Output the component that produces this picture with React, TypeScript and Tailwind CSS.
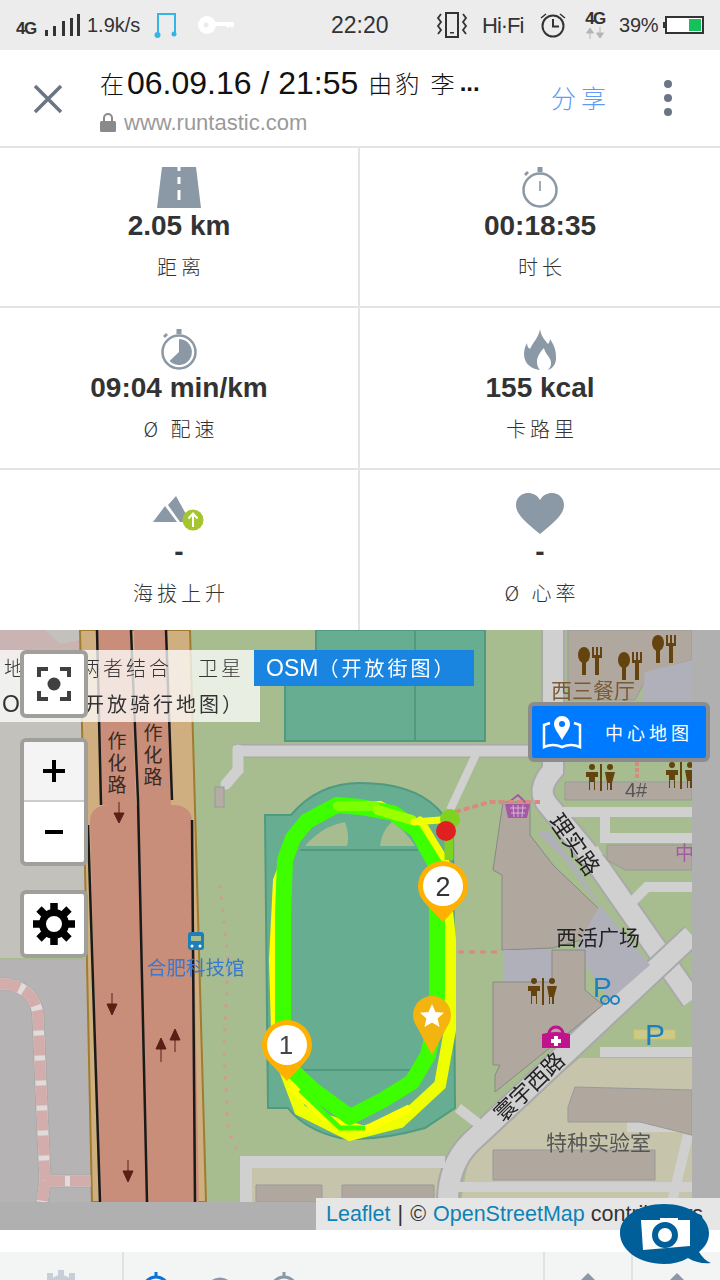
import React from "react";

const cjk = "font-['Noto_Sans_CJK_SC',sans-serif]";

const RoadIcon = () => (
  <svg width="44" height="41" viewBox="0 0 44 41">
    <path d="M5 0h34l5 41H0z" fill="#8b98a6" />
    <rect x="20.500" y="0" width="3" height="4" fill="#fff" />
    <rect x="20.500" y="10" width="3" height="7" fill="#fff" />
    <rect x="20.500" y="23" width="3" height="10" fill="#fff" />
  </svg>
);

const WatchIcon = () => (
  <svg width="40" height="41" viewBox="0 0 40 41">
    <rect x="17.500" y="0" width="5" height="5" fill="#8b98a6" />
    <path d="M4 7l3-3 2 2-3 3z" fill="#8b98a6" />
    <circle cx="20" cy="23" r="16.500" fill="none" stroke="#8b98a6" strokeWidth="2.500" />
    <rect x="19.200" y="14" width="1.600" height="10" fill="#8b98a6" />
  </svg>
);

const PaceIcon = () => (
  <svg width="40" height="41" viewBox="0 0 40 41">
    <rect x="17.500" y="0" width="5" height="5" fill="#8b98a6" />
    <path d="M4 7l3-3 2 2-3 3z" fill="#8b98a6" />
    <circle cx="20" cy="23" r="16.500" fill="none" stroke="#8b98a6" strokeWidth="2.500" />
    <path d="M20 10a13 13 0 1 1-9.500 22L20 23z" fill="#8b98a6" />
  </svg>
);

const FlameIcon = () => (
  <svg width="32" height="41" viewBox="0 0 32 41">
    <path
      d="M16 0c1 7 4 10 8 15 1-1 2-3 2-5 4 6 6 11 6 19 0 6-3 10-8 12 3-3 4-7 2-11-2-4-5-6-6-11-3 3-7 8-7 14 0 3 1 6 3 8-7-1-16-5-16-16 0-3 1-8 3-11 0 3 1 5 3 6C9 13 15 8 16 0z"
      fill="#8b98a6"
    />
  </svg>
);

const ClimbIcon = () => (
  <svg width="52" height="36" viewBox="0 0 52 36">
    <path d="M0 26L12 10l12 16z" fill="#8b98a6" />
    <path d="M15 9L23 0l11 20-4 6-3 0z" fill="#8b98a6" />
    <circle cx="40" cy="24" r="10.500" fill="#a4c52e" />
    <path d="M40 31V18M35.500 22.500L40 17.500l4.500 5" fill="none" stroke="#fff" strokeWidth="2" />
  </svg>
);

const HeartIcon = () => (
  <svg width="50" height="41" viewBox="0 0 50 41">
    <path d="M25 41C12 30 1 22 1 12 1 5 6 0 13 0c5 0 9 2 12 7 3-5 7-7 12-7 7 0 12 5 12 12 0 10-11 18-24 29z" fill="#8b98a6" />
  </svg>
);

const stats = [
  { value: "2.05 km", label: "距离", icon: <RoadIcon />, pad: "pt-[19px] h-[158px] border-r-2" },
  { value: "00:18:35", label: "时长", icon: <WatchIcon />, pad: "pt-[19px] h-[158px]" },
  { value: "09:04 min/km", label: "Ø 配速", icon: <PaceIcon />, pad: "pt-[21px] h-[160px] border-r-2" },
  { value: "155 kcal", label: "卡路里", icon: <FlameIcon />, pad: "pt-[21px] h-[160px]" },
  { value: "-", label: "海拔上升", icon: <ClimbIcon />, pad: "pt-[23px] h-[160px] border-r-2" },
  { value: "-", label: "Ø 心率", icon: <HeartIcon />, pad: "pt-[23px] h-[160px]" },
];

const StatCell = ({ value, label, icon, pad }: { value: string; label: string; icon: React.ReactNode; pad: string }) => (
  <div className={`flex flex-col items-center border-[#e4e4e4] ${pad}`}>
    <div className="h-[41px] flex items-center justify-center">{icon}</div>
    <div className="h-[36px] leading-[36px] text-[28px] font-bold text-[#333]">{value}</div>
    <div className={`mt-[9px] h-[28px] leading-[28px] pl-[4px] text-[20px] tracking-[4px] text-[#333] font-light ${cjk}`}>{label}</div>
  </div>
);

const StatusBar = () => (
  <div className="h-[50px] bg-[#ececec] flex items-center text-[#333] shrink-0">
    <span className="ml-[16px] w-[22px] mt-[8px] text-[17px] font-bold tracking-[-1.500px]">4G</span>
    <svg className="ml-[6px]" width="36" height="24" viewBox="0 0 36 24">
      <rect x="1" y="17" width="3" height="6" fill="#333" />
      <rect x="9" y="13" width="3" height="10" fill="#333" />
      <rect x="18" y="8" width="3" height="15" fill="#333" />
      <rect x="26" y="5" width="3" height="18" fill="#333" />
      <rect x="33" y="1" width="3" height="22" fill="#333" />
    </svg>
    <span className="ml-[7px] w-[60px] text-[20px]">1.9k/s</span>
    <svg className="ml-[7px]" width="24" height="28" viewBox="0 0 24 28">
      <path d="M4 24V3h17v20" fill="none" stroke="#35b5e5" strokeWidth="2" />
      <circle cx="3.500" cy="24" r="3" fill="#35b5e5" />
      <circle cx="20" cy="23" r="2.500" fill="#35b5e5" />
    </svg>
    <svg className="ml-[20px]" width="36" height="18" viewBox="0 0 36 18">
      <circle cx="9" cy="9" r="9" fill="#fff" />
      <circle cx="8" cy="9" r="2.500" fill="#ececec" />
      <path d="M16 6h20v4l-2 2-2-2-2 2-2-2h-12z" fill="#fff" />
    </svg>
    <span className="ml-[97px] w-[60px] text-[23px]">22:20</span>
    <svg className="ml-[45px]" width="32" height="28" viewBox="0 0 32 28">
      <rect x="10" y="2" width="12" height="24" fill="none" stroke="#333" strokeWidth="2" />
      <rect x="14" y="21" width="4" height="1.500" fill="#333" />
      <path d="M5 3l-3 4 3 4-3 4 3 4-3 4M27 3l3 4-3 4 3 4-3 4 3 4" fill="none" stroke="#333" strokeWidth="1.800" />
    </svg>
    <span className="ml-[14px] w-[44px] text-[22px] tracking-[-1px]">Hi·Fi</span>
    <svg className="ml-[13px]" width="28" height="28" viewBox="0 0 28 28">
      <circle cx="14" cy="15" r="10.500" fill="none" stroke="#333" strokeWidth="2" />
      <path d="M14 8v7.500h6" fill="none" stroke="#333" strokeWidth="2" />
      <path d="M2 7l5-4M26 7l-5-4" fill="none" stroke="#333" strokeWidth="1.500" />
    </svg>
    <div className="ml-[17px] w-[22px] flex flex-col items-center">
      <span className="text-[17px] leading-[16px] font-bold tracking-[-1.500px]">4G</span>
      <svg width="20" height="12" viewBox="0 0 20 12">
        <path d="M5 12V5M1.500 6L5 1l3.500 5z" stroke="#b5b5b5" fill="#b5b5b5" />
        <path d="M15 0v7M11.500 6L15 11l3.500-5z" stroke="#b5b5b5" fill="#b5b5b5" />
      </svg>
    </div>
    <span className="ml-[13px] w-[44px] text-[20px] tracking-[-0.200px]">39%</span>
    <svg width="41" height="18" viewBox="0 0 41 18">
      <rect x="0" y="6" width="2" height="6" fill="#333" />
      <rect x="3" y="1" width="37" height="16" fill="#fff" stroke="#333" strokeWidth="2" />
      <rect x="26" y="3" width="12" height="12" fill="#16c05a" />
    </svg>
  </div>
);

const Header = () => (
  <div className="h-[98px] bg-white border-b-2 border-[#e4e4e4] flex items-center shrink-0">
    <svg className="ml-[33px] mt-[1px]" width="30" height="30" viewBox="0 0 30 30">
      <path d="M2 2l26 26M28 2L2 28" stroke="#6c7585" strokeWidth="3.500" fill="none" />
    </svg>
    <div className="ml-[37px] w-[420px] mt-[2px]">
      <div className="text-[32px] leading-[38px] text-[#111] whitespace-nowrap flex items-center">
        <span className={`text-[24px] mr-[3px] font-light ${cjk}`}>在</span>
        06.09.16 / 21:55
        <span className={`text-[24px] ml-[10px] tracking-[3px] font-light whitespace-pre ${cjk}`}>由豹 李</span>
        <span className="ml-[2px] text-[24px] font-bold">...</span>
      </div>
      <div className="flex items-center h-[24px] mt-[8px]">
        <svg width="16" height="19" viewBox="0 0 16 19">
          <path d="M4 8V5a4 4 0 0 1 8 0v3" fill="none" stroke="#8a8a8a" strokeWidth="2" />
          <rect x="0" y="8" width="16" height="11" rx="1.500" fill="#8a8a8a" />
        </svg>
        <span className="ml-[8px] text-[22px] text-[#9a9a9a]">www.runtastic.com</span>
      </div>
    </div>
    <span className={`ml-[31px] w-[80px] text-[25px] tracking-[5px] text-[#5f9bf5] font-light ${cjk}`}>分享</span>
    <div className="ml-[33px] flex flex-col gap-[6px]">
      <span className="size-[8px] rounded-full bg-[#6c7585]" />
      <span className="size-[8px] rounded-full bg-[#6c7585]" />
      <span className="size-[8px] rounded-full bg-[#6c7585]" />
    </div>
  </div>
);

// 刀叉 / 厕所之类的地图小图标
const Fork = ({ x, y }: { x: number; y: number }) => (
  <g transform={`translate(${x} ${y})`} fill="#65430e">
    <ellipse cx="6" cy="8" rx="6" ry="8" />
    <rect x="4" y="14" width="4" height="14" />
    <path d="M14 0h2v8h2V0h2v8h2V0h2v11h-3v17h-4V11h-3z" />
  </g>
);

const Toilet = ({ x, y }: { x: number; y: number }) => (
  <g transform={`translate(${x} ${y})`} fill="#65430e">
    <circle cx="6" cy="3" r="3" />
    <path d="M0 8h12v5H9v13H8v-8H4v8H3V13H0z" />
    <rect x="14" y="0" width="2" height="27" />
    <circle cx="24" cy="3" r="3" />
    <path d="M19 8h10l-3 11v7h-2v-7h-2v7h-1v-7z" />
  </g>
);

const MapDrawing = () => (
  <svg className="block" width="720" height="600" viewBox="0 630 720 600">
    <rect x="0" y="630" width="720" height="600" fill="#b0b0b0" />
    <svg x="0" y="630" width="692" height="572" viewBox="0 630 692 572">
      <g className="blur-[0.6px]">
        <rect x="0" y="630" width="692" height="572" fill="#a7bd8f" />
        <path d="M0 630H90V958H0z" fill="#c3c1bc" />
        <path d="M0 960H95V1202H0z" fill="#b5b3b3" />
        <path d="M0 630h45l15 14 20-4v22H0z" fill="#c9b3b3" />
        {/* 左下小路 */}
        <path d="M0 984h8q28 6 30 32l7 165M45 1181h50M45 1181l-3 21" fill="none" stroke="#a9a9a9" strokeWidth="13" />
        <path d="M0 984h8q28 6 30 32l7 165M45 1181h50M45 1181l-3 21" fill="none" stroke="#e0dcdc" strokeWidth="11" />
        <path d="M0 984h8q28 6 30 32l7 165M45 1181h50M45 1181l-3 21" fill="none" stroke="#d3adac" strokeWidth="11" strokeDasharray="20 5" />
        {/* 高架 */}
        <path d="M80 630H190L206 1202H92z" fill="#cfae80" stroke="#a07c30" strokeWidth="2" />
        <path d="M98 630H130L136 805H101z" fill="#c98e7a" />
        <path d="M134 630H166L171 805H138z" fill="#c98e7a" />
        <path d="M90 822q0-17 20-17h62q20 0 20 17l7 380H100z" fill="#c98e7a" />
        <path d="M97 630l4 175M131 630l7 170L147 1202M166 630l6 170M88 825L100 1202M192 820L195 1202" fill="none" stroke="#1a1a1a" strokeWidth="2.500" />
        <path d="M119 802v12M114 813l5 10 5-10z" fill="#5a1f15" stroke="#5a1f15" />
        <path d="M112 993v12M107 1004l5 11 5-11z" fill="#5a1f15" stroke="#5a1f15" />
        <path d="M128 1160v12M123 1171l5 11 5-11z" fill="#5a1f15" stroke="#5a1f15" />
        <path d="M161 1062v-14M156 1049l5-11 5 11z" fill="#5a1f15" stroke="#5a1f15" />
        <path d="M175 1052v-13M170 1040l5-11 5 11z" fill="#5a1f15" stroke="#5a1f15" />
        <text x="117" y="731" writingMode="vertical-rl" fontSize="19" letterSpacing="3" fill="#3a2a20" fontFamily="Noto Sans CJK SC, sans-serif">作化路</text>
        <text x="153" y="723" writingMode="vertical-rl" fontSize="19" letterSpacing="3" fill="#3a2a20" fontFamily="Noto Sans CJK SC, sans-serif">作化路</text>
        <path d="M220 885L228 960L224 1050L228 1130L241 1160" fill="none" stroke="#d39a90" strokeWidth="3" strokeDasharray="3 9" />

        {/* 球场 */}
        <path d="M316 630V660H285V741H485V630z" fill="#67ad92" stroke="#4f9a80" strokeWidth="2" />
        <path d="M415 630V741" stroke="#4f9a80" strokeWidth="2" />
        <path d="M265 815H291Q318 783 360 783Q412 783 437 808L453 826L455 1108L425 1128Q375 1142 340 1138Q305 1130 288 1108H268z" fill="#67ad92" stroke="#4f9a80" strokeWidth="2" />
        <path d="M300 850H418M292 1070H418" stroke="#4f9a80" strokeWidth="2" />
        <path d="M305 846Q322 826 345 822Q350 835 347 846z" fill="#a7bd8f" />
        <path d="M380 846Q382 830 392 822Q405 830 415 846z" fill="#a7bd8f" />

        {/* 地块 */}
        <path d="M470 1150L580 1058H692V1202H461z" fill="#c6c4ab" />
        <path d="M240 1165H445V1202H240z" fill="#c6c4ab" />

        {/* 道路 */}
        <path d="M233 751H552" stroke="#a9a9a9" strokeWidth="14" fill="none" />
        <path d="M233 751H552" stroke="#d0d0d0" strokeWidth="11" fill="none" />
        <path d="M238 750V770L226 784" stroke="#d0d0d0" strokeWidth="11" fill="none" strokeLinecap="round" />
        <rect x="215" y="787" width="9" height="20" fill="#b5ada5" stroke="#999" />
        <path d="M477 752L450 810" stroke="#d0d0d0" strokeWidth="8" fill="none" />
        <path d="M553 630V770Q535 790 548 805L600 868L692 1000" stroke="#a9a9a9" strokeWidth="24" fill="none" />
        <path d="M553 630V770Q535 790 548 805L600 868L692 1000" stroke="#d0d0d0" strokeWidth="20" fill="none" />
        <path d="M560 812H692M600 838H692M605 812V838M600 850L588 858M692 887H647L627 907" stroke="#d0d0d0" strokeWidth="10" fill="none" />
        <path d="M692 935L470 1143Q448 1165 448 1202" stroke="#a9a9a9" strokeWidth="24" fill="none" />
        <path d="M692 935L470 1143Q448 1165 448 1202" stroke="#d0d0d0" strokeWidth="20" fill="none" />
        <path d="M240 1162H445" stroke="#d0d0d0" strokeWidth="12" fill="none" />
        <path d="M246 1202V1162" stroke="#d0d0d0" strokeWidth="12" fill="none" />
        <path d="M450 1187H692" stroke="#d0d0d0" strokeWidth="10" fill="none" />
        <path d="M458 1108L480 1125" stroke="#d0d0d0" strokeWidth="10" fill="none" />
        <path d="M600 1052H692" stroke="#d0d0d0" strokeWidth="10" fill="none" />
        <path d="M627 1127H692M688 1135L672 1202" stroke="#d0d0d0" strokeWidth="10" fill="none" />

        {/* 建筑 */}
        <path d="M252 1172H436V1202H252z" fill="#c6c4ab" />
        <path d="M256 1185H322V1202H256zM342 1185H434V1202H342z" fill="#b0a89f" stroke="#999" />
        <path d="M568 630H692V660L650 672L635 700H568z" fill="#b0a89f" stroke="#999" />
        <path d="M645 672L692 660V700L640 722z" fill="#b0b0ba" />
        <path d="M565 782H692V800H565z" fill="#b0a89f" stroke="#999" />
        <path d="M607 845H692V870H625L607 860z" fill="#b0a89f" stroke="#999" />
        <path d="M503 802H530V835L553 865L600 910V935L552 948L502 950V875L493 870z" fill="#b0a89f" stroke="#888" />
        <path d="M537 832L550 832L575 865L600 905L590 895L565 860z" fill="#b0b0ba" />
        <path d="M600 905L650 965L610 1000L575 950z" fill="#b0b0ba" />
        <path d="M503 950H552V982H503z" fill="#b0b0ba" />
        <path d="M493 982H552V950H585V990L603 1005L495 1092V1075L500 1065H493z" fill="#b0a89f" stroke="#888" />
        <path d="M575 1087L692 1090V1135L640 1122H568V1107z" fill="#b0a89f" stroke="#999" />
        <path d="M493 1150H655V1180H493z" fill="#b0a89f" stroke="#999" />
        <rect x="634" y="1030" width="41" height="9" fill="#c8cb8e" stroke="#d8c060" />

        {/* 图标 */}
        <Fork x={578} y={647} />
        <Fork x={618} y={652} />
        <Fork x={652} y={635} />
        <Toilet x={586} y={764} />
        <Toilet x={666} y={762} />
        <Toilet x={528} y={978} />
        <path d="M505 804h25l-3 14h-19z" fill="#a35aa5" />
        <path d="M510 808h16M511 813h14M513 805l1 12M518 805v12M523 805l-1 12" stroke="#d7b3d8" strokeWidth="1" fill="none" />
        <path d="M508 803l10-8 8 8" fill="none" stroke="#a35aa5" strokeWidth="2" />
        <path d="M542 1034q14-4 28 0v14h-28z" fill="#c0148c" />
        <path d="M549 1034a7 7 0 0 1 14 0" fill="none" stroke="#c0148c" strokeWidth="3" />
        <path d="M554 1036h4v3h3v4h-3v3h-4v-3h-3v-4h3z" fill="#fff" />
        <rect x="188" y="932" width="16" height="18" rx="3" fill="#1c7fb8" />
        <rect x="191" y="936" width="10" height="5" fill="#a7bd8f" />
        <circle cx="192" cy="946" r="1.500" fill="#fff" />
        <circle cx="200" cy="946" r="1.500" fill="#fff" />
        <text x="593" y="997" fontSize="28" fill="#1c80c0" fontFamily="Liberation Sans, sans-serif">P</text>
        <text x="645" y="1045" fontSize="30" fill="#1c80c0" fontFamily="Liberation Sans, sans-serif">P</text>
        <circle cx="605" cy="1000" r="4" fill="none" stroke="#1c80c0" strokeWidth="2" />
        <circle cx="615" cy="1000" r="4" fill="none" stroke="#1c80c0" strokeWidth="2" />

        {/* 虚线 */}
        <path d="M455 812L490 802H540" fill="none" stroke="#d98a80" strokeWidth="4" strokeDasharray="6 3" />
        <path d="M637 762V778" stroke="#d98a80" strokeWidth="4" strokeDasharray="4 2" />
        <path d="M458 952H502" stroke="#d98a80" strokeWidth="3" strokeDasharray="6 5" />

        {/* 地名 */}
        <text x="551" y="698" fontSize="21" fill="#7a5a36" fontFamily="Noto Sans CJK SC, sans-serif">西三餐厅</text>
        <text x="625" y="797" fontSize="20" fill="#555" fontFamily="Liberation Sans, sans-serif">4#</text>
        <text x="556" y="945" fontSize="21" fill="#222" fontFamily="Noto Sans CJK SC, sans-serif">西活广场</text>
        <text x="147" y="975" fontSize="19.500" fill="#3a78d0" fontFamily="Noto Sans CJK SC, sans-serif">合肥科技馆</text>
        <text x="546" y="1150" fontSize="21" fill="#555" fontFamily="Noto Sans CJK SC, sans-serif">特种实验室</text>
        <text x="675" y="860" fontSize="19" fill="#a35aa5" fontFamily="Noto Sans CJK SC, sans-serif">中</text>
        <text transform="translate(548 821) rotate(55)" fontSize="23" fill="#222" fontFamily="Noto Sans CJK SC, sans-serif">理实路</text>
        <text transform="translate(503 1123) rotate(-44)" fontSize="22" fill="#222" fontFamily="Noto Sans CJK SC, sans-serif">寰宇西路</text>
      </g>

      {/* 轨迹 */}
      <path d="M274 1030L272 960L276 880L295 830L340 804" fill="none" stroke="#ffff00" strokeWidth="6" />
      <path d="M285 1070L300 1110L350 1135L400 1122L440 1085L450 1030V940L444 880" fill="none" stroke="#eeff00" strokeWidth="12" />
      <path d="M290 1085L325 1118L365 1130L410 1108" fill="none" stroke="#ffff00" strokeWidth="8" />
      <path d="M338 805H380L425 828L447 865" fill="none" stroke="#ffff00" strokeWidth="8" />
      <path d="M417 830L393 813L360 807L337 805L307 821L293 838L285 860L283 913L283 1023L292 1070L313 1090L350 1117L383 1100L412 1082L428 1055L436 1020L437 993L437 913L435 863z" fill="none" stroke="#3dff00" strokeWidth="16" strokeLinejoin="round" />
      <path d="M300 1090L340 1128L365 1128" fill="none" stroke="#3dff00" strokeWidth="5" />
      <path d="M338 806H375" fill="none" stroke="#7cff00" strokeLinecap="round" strokeWidth="10" />
      <path d="M378 810L412 820" fill="none" stroke="#9cff00" strokeLinecap="round" strokeWidth="10" />
      <path d="M414 822L440 820M420 820L445 860" fill="none" stroke="#f0ff00" strokeLinecap="round" strokeWidth="7" />
      <path d="M449 835V860" stroke="#7ed321" strokeWidth="9" fill="none" />
      <circle cx="450" cy="819" r="10" fill="#7ed321" />
      <circle cx="446" cy="831" r="10" fill="#e02020" />

      {/* 标记 */}
      <path d="M262 1045a25 25 0 0 1 50 0q0 10-8 18l-17 18-17-18q-8-8-8-18z" fill="#ffb000" />
      <circle cx="287" cy="1045" r="20" fill="#fff" />
      <text x="286" y="1054" fontSize="26" textAnchor="middle" fill="#444" fontFamily="Liberation Sans, sans-serif">1</text>
      <path d="M418 886a25 25 0 0 1 50 0q0 10-8 18l-17 18-17-18q-8-8-8-18z" fill="#ffb000" />
      <circle cx="443" cy="886" r="20" fill="#fff" />
      <text x="443" y="896" fontSize="27" textAnchor="middle" fill="#333" fontFamily="Liberation Sans, sans-serif">2</text>
      <path d="M413 1015a19 19 0 0 1 38 0q0 6-4 12l-15 28-15-28q-4-6-4-12z" fill="#f4b40f" />
      <path d="M432 1004l3.500 8 8.500.8-6.400 5.700 2 8.500-7.600-4.500-7.600 4.500 2-8.500-6.400-5.700 8.500-.8z" fill="#fff" />
    </svg>
  </svg>
);

const MapControls = () => (
  <div className="absolute left-[20px] top-[20px] flex flex-col">
    <div className="w-[68px] h-[68px] border-[4px] border-[#a09f9a] rounded-[6px] bg-white flex items-center justify-center">
      <svg width="34" height="34" viewBox="0 0 34 34">
        <path d="M2 10V2h9M23 2h9v8M32 24v8h-9M11 32H2v-8" fill="none" stroke="#404040" strokeWidth="4" />
        <circle cx="17" cy="17" r="6.500" fill="#404040" />
      </svg>
    </div>
    <div className="mt-[20px] w-[68px] h-[128px] border-[4px] border-[#a09f9a] rounded-[6px] bg-white flex flex-col overflow-hidden">
      <div className="h-[60px] bg-[#f4f4f4] border-b-2 border-[#ccc] flex items-center justify-center">
        <svg width="22" height="22" viewBox="0 0 22 22"><path d="M0 11h22M11 0v22" stroke="#000" strokeWidth="4" /></svg>
      </div>
      <div className="flex-1 flex items-center justify-center">
        <svg width="18" height="4" viewBox="0 0 18 4"><rect width="18" height="4" fill="#000" /></svg>
      </div>
    </div>
    <div className="mt-[24px] w-[68px] h-[68px] border-[4px] border-[#a09f9a] rounded-[6px] bg-white flex items-center justify-center">
      <svg width="42" height="42" viewBox="0 0 42 42">
        <circle cx="21" cy="21" r="11.500" fill="none" stroke="#000" strokeWidth="7" />
        <g stroke="#000" strokeWidth="7.500">
          <path d="M21 0v8M21 34v8M0 21h8M34 21h8M6 6l6 6M30 30l6 6M36 6l-6 6M12 30l-6 6" />
        </g>
      </svg>
    </div>
  </div>
);

const MapTabs = () => (
  <div className={`absolute left-0 top-[20px] text-[20px] leading-[36px] text-[#333] whitespace-nowrap tracking-[3px] ${cjk}`}>
    <div className="h-[36px] flex">
      <div className="w-[254px] bg-white/75 flex font-light">
        <span className="ml-[4px] w-[76px]">地图</span>
        <span className="w-[118px]">两者结合</span>
        <span>卫星</span>
      </div>
      <div className="w-[220px] bg-[#1a85e0] text-white pl-[12px] tracking-[3px]">
        <span className="font-['Liberation_Sans'] text-[23px] tracking-[0px]">OSM</span>（开放街图）
      </div>
    </div>
    <div className="h-[36px] w-[260px] bg-white/75 flex">
      <span className="ml-[2px] w-[82px] font-['Liberation_Sans'] text-[23px]">OCM</span>
      <span>开放骑行地图）</span>
    </div>
  </div>
);

const CenterButton = () => (
  <div className={`absolute left-[528px] top-[72px] w-[182px] h-[60px] border-[4px] border-[#8c8c8c] rounded-[6px] bg-[#007bff] flex items-center text-white text-[18px] tracking-[4px] ${cjk}`}>
    <svg className="ml-[10px]" width="40" height="34" viewBox="0 0 40 34">
      <path d="M8 8L2 10V32q9-4 18 0q9-4 18 0V10L32 8" fill="none" stroke="#fff" strokeWidth="2.500" />
      <path d="M20 1a8 8 0 0 1 8 8c0 5-5 10-8 16-3-6-8-11-8-16a8 8 0 0 1 8-8z" fill="#fff" />
      <circle cx="20" cy="9" r="3" fill="#007bff" />
    </svg>
    <span className="ml-[23px]">中心地图</span>
  </div>
);

const Attribution = () => (
  <div className="absolute left-[316px] top-[568px] w-[404px] h-[32px] bg-[#e6e6e6] pl-[10px] text-[21.500px] leading-[32px] text-[#333] whitespace-nowrap">
    <span className="text-[#0f82b5]">Leaflet</span>
    <span className="ml-[7px] mr-[7px]">|</span>©
    <span className="ml-[7px] text-[#0f82b5]">OpenStreetMap</span> contributors
  </div>
);

const CameraBubble = () => (
  <svg className="absolute left-[618px] top-[1204px]" width="94" height="64" viewBox="0 0 94 64">
    <path d="M46 0c25 0 45 13 45 29 0 8-4 14-10 19 3 5 7 9 12 11-8 1-17-1-23-5-7 4-15 6-24 6C21 60 2 46 2 29S21 0 46 0z" fill="#005f99" />
    <path d="M23 16H42V14H60V16H72V42L25 46z" fill="#fff" />
    <circle cx="47" cy="31" r="10" fill="#fff" stroke="#005f99" strokeWidth="6" />
  </svg>
);

const BottomBar = () => (
  <div className="mt-[22px] h-[28px] bg-[#f3f5f5] flex overflow-hidden shrink-0">
    <div className="w-[124px] border-r-2 border-[#e0e2e2] flex justify-center pt-[18px]">
      <svg width="36" height="36" viewBox="0 0 36 36"><circle cx="18" cy="18" r="13" fill="#c8ced8" /><path d="M15 0h6v8h-6zM4 3h6v8H4zM26 3h6v8h-6z" fill="#c8ced8" /></svg>
    </div>
    <div className="w-[421px] border-r-2 border-[#e0e2e2] flex pt-[20px]">
      <svg className="ml-[17px]" width="30" height="30" viewBox="0 0 30 30"><rect x="13.500" y="0" width="3" height="5" fill="#0a73d9" /><circle cx="15" cy="18" r="13" fill="none" stroke="#0a73d9" strokeWidth="3" /></svg>
      <svg className="ml-[34px] mt-[5px]" width="30" height="30" viewBox="0 0 30 30"><circle cx="15" cy="15" r="13" fill="none" stroke="#8b98a6" strokeWidth="3" /></svg>
      <svg className="ml-[34px]" width="30" height="30" viewBox="0 0 30 30"><rect x="13.500" y="0" width="3" height="5" fill="#8b98a6" /><circle cx="15" cy="18" r="13" fill="none" stroke="#8b98a6" strokeWidth="3" /></svg>
    </div>
    <div className="w-[88px] border-r-2 border-[#e0e2e2] flex justify-center pt-[21px]">
      <svg width="16" height="8" viewBox="0 0 16 8"><path d="M8 0l8 8H0z" fill="#8b98a6" /></svg>
    </div>
    <div className="flex-1 flex justify-center pt-[21px]">
      <svg width="16" height="8" viewBox="0 0 16 8"><path d="M8 0l8 8H0z" fill="#8b98a6" /></svg>
    </div>
  </div>
);

export default function App() {
  return (
    <div className="relative w-[720px] h-[1280px] overflow-hidden bg-white flex flex-col font-['Liberation_Sans','Noto_Sans_CJK_SC',sans-serif]">
      <StatusBar />
      <Header />
      <div className="grid grid-cols-2 shrink-0">
        {stats.map((s, i) => (
          <div key={s.label} className={i < 4 ? "border-b-2 border-[#e4e4e4]" : ""}>
            <StatCell {...s} />
          </div>
        ))}
      </div>
      <div className="relative h-[600px] shrink-0">
        <MapDrawing />
        <MapTabs />
        <MapControls />
        <CenterButton />
        <Attribution />
      </div>
      <BottomBar />
      <CameraBubble />
    </div>
  );
}
